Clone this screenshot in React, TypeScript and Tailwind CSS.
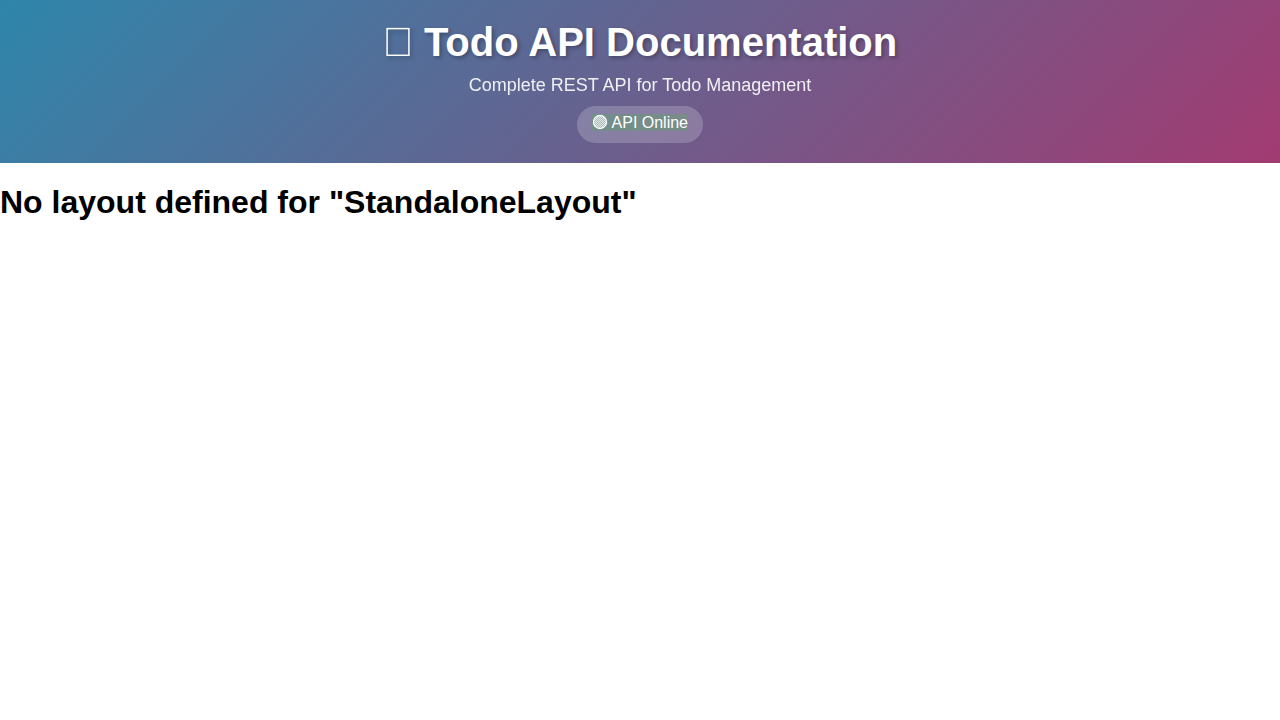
function TitleIcon() {
  return (
    <svg
      aria-hidden="true"
      viewBox="0 0 30 30"
      className="inline-block h-[30px] w-[30px] align-baseline drop-shadow-[2px_2px_2px_rgba(0,0,0,0.3)]"
    >
      <rect x="4.1" y="2.6" width="21.8" height="26.7" fill="none" stroke="white" strokeWidth="1.5" />
    </svg>
  );
}

function StatusIcon() {
  return (
    <svg aria-hidden="true" viewBox="0 0 16 16" className="inline-block h-4 w-4 align-text-top">
      <defs>
        <pattern id="status-hatch" width="2" height="2" patternUnits="userSpaceOnUse">
          <rect width="2" height="2" fill="white" fillOpacity="0.4" />
          <rect width="1" height="1" fill="white" fillOpacity="0.65" />
          <rect x="1" y="1" width="1" height="1" fill="white" fillOpacity="0.65" />
        </pattern>
      </defs>
      <circle cx="8" cy="8" r="6.6" fill="url(#status-hatch)" stroke="white" strokeWidth="1.2" />
    </svg>
  );
}

export default function App() {
  return (
    <div className="min-h-screen bg-white font-['Liberation_Sans',Arial,sans-serif] text-black">
      <header className="bg-[linear-gradient(135deg,#2e86ab_0%,#a23b72_100%)] p-5 text-center text-white">
        <h1 className="text-[40px] leading-[45px] font-bold [text-shadow:2px_2px_4px_rgba(0,0,0,0.3)]">
          <TitleIcon /> Todo API Documentation
        </h1>
        <p className="mt-2.5 text-[18px] leading-[21px] opacity-90">Complete REST API for Todo Management</p>
        <div className="mt-2.5 flex justify-center">
          <div className="rounded-[20px] bg-white/20 px-[15px] pt-2 pb-[11px] leading-[18px]">
            <span className="bg-[rgba(76,175,80,0.3)]">
              <StatusIcon /> API Online
            </span>
          </div>
        </div>
      </header>
      <main>
        <h2 className="mt-[21px] text-[32px] leading-9 font-bold">No layout defined for "StandaloneLayout"</h2>
      </main>
    </div>
  );
}
